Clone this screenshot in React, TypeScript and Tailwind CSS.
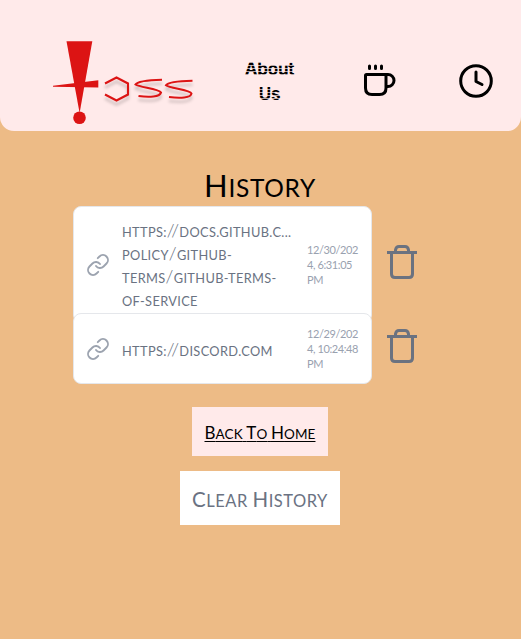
import React from "react";

function Word({ text, big }: { text: string; big: string }) {
  return (
    <>
      <span className={big}>{text[0]}</span>
      {text.slice(1)}
    </>
  );
}

function Logo() {
  return (
    <svg className="h-[90px] w-[146px] shrink-0" viewBox="50 36 146 90" fill="none">
      <g fill="#dc1414">
        <path d="M66.5 41.3H92.3L79.6 113Z" />
        <path d="M53 85.800L98.3 80.2V87.6L53 86.800Z" />
        <circle cx="79.5" cy="117.8" r="6.300" />
      </g>
      <g stroke="#dc1414" strokeWidth="2.1" style={{ filter: "drop-shadow(0 4px 1.5px #0003)" }}>
        <path d="M105 83.5L116.5 77.5L128 83.5V94.5L116.5 100.5L105 94.5" />
        <path d="M162 79.700C150 80 137.500 81 135.500 84.500C140 87.500 159 88.500 161 92.500C160 97 149 97.500 138.500 96" />
        <path d="M192.500 80.700C180 81 168 82 166 85.300C170 88.500 190 89.500 191.500 93.500C191 98 180 98.500 169 97" />
      </g>
    </svg>
  );
}

function LinkIcon() {
  return (
    <svg className="size-6 shrink-0" viewBox="0 0 24 24" fill="none" stroke="#9ca3af" strokeWidth="1.9" strokeLinecap="round" strokeLinejoin="round">
      <path d="M10 13a5 5 0 0 0 7.54.54l3-3a5 5 0 0 0-7.07-7.07l-1.72 1.71" />
      <path d="M14 11a5 5 0 0 0-7.54-.54l-3 3a5 5 0 0 0 7.07 7.07l1.71-1.71" />
    </svg>
  );
}

function Trash() {
  return (
    <svg className="h-[34px] w-[30px] shrink-0" viewBox="0 0 30 34" fill="none" stroke="#6b7280" strokeWidth="3" strokeLinejoin="round">
      <path d="M0 7.500H30M8.500 7V5Q9 1.500 12 1.500H18Q21 1.500 21.500 5V7M4.500 8V29Q4.500 32.500 8 32.500H22Q25.500 32.500 25.500 29V8" />
    </svg>
  );
}

function Url({ text }: { text: string }) {
  return (
    <div className="h-[23px]">
      {text.split(/(\/+)/).map((part, i) =>
        part.startsWith("/") ? <span key={i} className="text-[18px] leading-none font-light">{part}</span> : part,
      )}
    </div>
  );
}

function Row({ lines, date, card }: { lines: string[]; date: string[]; card: string }) {
  return (
    <div className="flex items-center">
      <div className={"flex w-[299px] items-center rounded-lg border border-gray-200 bg-white pl-3 " + card}>
        <LinkIcon />
        <div className="ml-3 w-[185px] pt-[5px] text-[12.800px] leading-[23px] tracking-[0.35px] whitespace-nowrap text-gray-500 uppercase">
          {lines.map((l) => <Url key={l} text={l} />)}
        </div>
        <div className="text-[11px] leading-[15px] tracking-[-0.4px] whitespace-nowrap text-gray-400">
          {date.map((l) => <div key={l}>{l}</div>)}
        </div>
      </div>
      <button className="mb-[6px] ml-[15px]"><Trash /></button>
    </div>
  );
}

export default function App() {
  return (
    <div className="h-[639px] w-full overflow-hidden bg-[#edbb86] font-['Lato',sans-serif]">
      <header className="flex h-[131px] items-start rounded-b-[14px] bg-[#ffeaea] pt-9 pl-[50px]">
        <Logo />
        <a className="relative mt-[21px] ml-[43px] w-[61px] text-center font-['Inter',sans-serif] text-[17px] leading-[25px] font-bold tracking-[-0.2px]">
          About<br />Us
          <span className="absolute inset-0 bg-[repeating-linear-gradient(to_bottom,transparent_0px,transparent_2px,#ffeaea_2px,#ffeaea_3px)] opacity-70" />
        </a>
        <svg className="mt-7 ml-[63px] h-8 w-[34px] shrink-0" viewBox="0 0 34 32" fill="none" stroke="black" strokeWidth="3" strokeLinecap="round" strokeLinejoin="round">
          <path d="M6.500 2V4.500M12.500 2V4.500M18.500 2V4.500M3.500 10.500H23V24Q23 30.500 16.500 30.500H9Q2.500 30.500 2.500 24V11.500Q2.500 10.500 3.500 10.500M23 10.500H25A6 6 0 0 1 25 22.500H23" />
        </svg>
        <svg className="mt-7 ml-[62px] size-[34px] shrink-0" viewBox="0 0 34 34" fill="none" stroke="black" strokeWidth="3" strokeLinecap="round" strokeLinejoin="round">
          <circle cx="17" cy="17" r="15.300" /><path d="M17 8V17.500L23 20.500" />
        </svg>
      </header>
      <main className="flex flex-col items-center pr-px">
        <h1 className="mt-[34px] h-[41px] text-[24.500px] leading-10 tracking-[0.7px] whitespace-nowrap uppercase"><Word text="History" big="text-[31px]" /></h1>
        <section className="mr-[30px] w-[344px]">
          <Row card="h-[117px]" lines={["https://docs.github.c...", "policy/github-", "terms/github-terms-", "of-service"]} date={["12/30/202", "4, 6:31:05", "PM"]} />
          <div className="-mt-[10px]">
            <Row card="h-[71px]" lines={["https://discord.com"]} date={["12/29/202", "4, 10:24:48", "PM"]} />
          </div>
        </section>
        <a className="mt-[23px] flex h-[49px] w-[136px] items-center justify-center bg-[#ffeaea] pt-[3px] text-[13.500px] tracking-[0.1px] whitespace-nowrap">
          <span className="uppercase underline decoration-1 underline-offset-2"><Word text="Back" big="text-[17px]" /> <Word text="To" big="text-[17px]" /> <Word text="Home" big="text-[17px]" /></span>
        </a>
        <button className="mt-[15px] h-[54px] w-[160px] bg-white pt-[3px] text-[16.500px] tracking-[0.5px] whitespace-nowrap text-gray-500 uppercase">
          <Word text="Clear" big="text-[20.500px]" /> <Word text="History" big="text-[20.500px]" />
        </button>
      </main>
    </div>
  );
}
